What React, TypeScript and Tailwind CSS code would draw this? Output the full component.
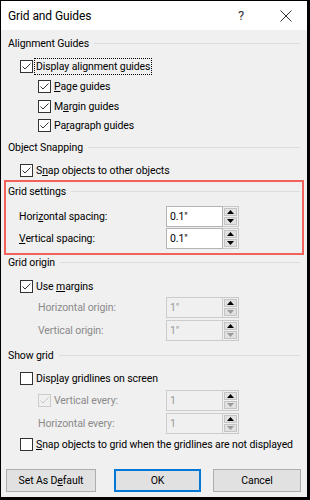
import React from 'react'

const font = "font-['Roboto',sans-serif]"

function CheckBox({ checked, disabled }: { checked?: boolean; disabled?: boolean }) {
  return (
    <div
      className={`w-[13px] h-[13px] shrink-0 border flex items-center justify-center ${
        disabled ? 'border-[#cccccc] bg-[#f0f0f0]' : 'border-[#333333] bg-white'
      }`}
    >
      {checked && (
        <svg width="11" height="11" viewBox="0 0 11 11">
          <path d="M1.5 5.5 L4 8 L9.5 2.5" fill="none" stroke={disabled ? '#c4c4c4' : '#333333'} strokeWidth="1" />
        </svg>
      )}
    </div>
  )
}

function CheckRow({
  label,
  checked,
  disabled,
  focus,
  indent,
  className = '',
}: {
  label: React.ReactNode
  checked?: boolean
  disabled?: boolean
  focus?: boolean
  indent: string
  className?: string
}) {
  return (
    <div className={`h-[20px] flex items-center ${indent} ${className}`}>
      <CheckBox checked={checked} disabled={disabled} />
      <span
        className={`ml-[1px] px-[1px] leading-[15px] whitespace-nowrap ${focus ? 'border border-dotted border-black' : 'border border-transparent'} ${
          disabled ? 'text-[#8a8a8a]' : 'text-black'
        }`}
      >
        {label}
      </span>
    </div>
  )
}

function Header({ title, className = '', pad = 'pl-[7px] pr-[7px]' }: { title: string; className?: string; pad?: string }) {
  return (
    <div className={`h-[16px] flex items-center ${pad} ${className}`}>
      <span className="text-black whitespace-nowrap">{title}</span>
      <div className="flex-1 h-px bg-[#dcdcdc] ml-[5px] mt-[-1px]" />
    </div>
  )
}

function Spinner({ disabled }: { disabled?: boolean }) {
  return (
    <div className="w-[16px] h-full flex flex-col gap-[1px] border border-[#c8c8c8] border-l-0 bg-[#f0f0f0] p-[1px]">
      <div className="flex-1 bg-[#e1e1e1] border border-[#c4c4c4] flex items-center justify-center">
        <svg width="7" height="4" viewBox="0 0 7 4">
          <path d="M0 4 L3.5 0 L7 4 Z" fill="#000" />
        </svg>
      </div>
      <div className="flex-1 bg-[#e1e1e1] border border-[#c4c4c4] flex items-center justify-center">
        <svg width="7" height="4" viewBox="0 0 7 4">
          <path d="M0 0 L3.5 4 L7 0 Z" fill={disabled ? '#9a9a9a' : '#000'} />
        </svg>
      </div>
    </div>
  )
}

function SpinRow({
  label,
  value,
  disabled,
  labelClass,
  className = '',
}: {
  label: React.ReactNode
  value: string
  disabled?: boolean
  labelClass: string
  className?: string
}) {
  return (
    <div className={`h-[21px] flex items-center ${className}`}>
      <div className={`${labelClass} whitespace-nowrap ${disabled ? 'text-[#8a8a8a]' : 'text-black'}`}>{label}</div>
      <div className="flex h-full">
        <div
          className={`w-[57px] h-full border flex items-center px-[3px] ${
            disabled ? 'border-[#cccccc] bg-[#f0f0f0] text-[#9a9a9a]' : 'border-[#b4b4b4] bg-white text-black'
          }`}
        >
          {value}
        </div>
        <Spinner disabled={disabled} />
      </div>
    </div>
  )
}

export default function App() {
  return (
    <div className={`w-[310px] h-[500px] border border-black border-r-[3px] border-b-[3px] bg-[#f0f0f0] text-[10.5px] tracking-[-0.1px] ${font} flex flex-col`}>
      {/* title bar */}
      <div className="h-[29px] bg-white flex items-center pl-[7px] shrink-0">
        <span className="text-[12px] text-black">Grid and Guides</span>
        <span className="ml-auto text-[13px] text-[#333333] mr-[36px]">?</span>
        <svg width="12" height="12" viewBox="0 0 12 12" className="mr-[15px]">
          <path d="M0.5 0.5 L11.5 11.5 M11.5 0.5 L0.5 11.5" stroke="#333" strokeWidth="1" />
        </svg>
      </div>

      <Header title="Alignment Guides" className="mt-[6px]" />
      <CheckRow indent="pl-[19px]" className="mt-[4px]" checked focus label="Display alignment guides" />
      <CheckRow indent="pl-[37px]" checked label={<><u>P</u>age guides</>} />
      <CheckRow indent="pl-[37px]" checked label={<>M<u>a</u>rgin guides</>} />
      <CheckRow indent="pl-[37px]" className="mt-[-1px]" checked label={<>Pa<u>r</u>agraph guides</>} />

      <Header title="Object Snapping" className="mt-[5px]" />
      <CheckRow indent="pl-[19px]" className="mt-[4px]" checked label={<>S<u>n</u>ap objects to other objects</>} />

      {/* highlighted grid settings */}
      <div className="mx-[3px] border-2 border-[#f0625a]">
        <Header title="Grid settings" className="mt-[2px]" pad="pl-[2px] pr-[2px]" />
        <SpinRow className="mt-[6px]" labelClass="pl-[13px] w-[160px]" label={<>Hori<u>z</u>ontal spacing:</>} value={'0.1"'} />
        <SpinRow className="mt-[1px] mb-[4px]" labelClass="pl-[13px] w-[160px]" label={<><u>V</u>ertical spacing:</>} value={'0.1"'} />
      </div>

      <Header title="Grid origin" />
      <CheckRow indent="pl-[19px]" className="mt-[5px]" checked label={<>Use <u>m</u>argins</>} />
      <SpinRow className="mt-[1px]" disabled labelClass="pl-[37px] w-[165px]" label="Horizontal origin:" value={'1"'} />
      <SpinRow className="mt-[2px]" disabled labelClass="pl-[37px] w-[165px]" label="Vertical origin:" value={'1"'} />

      <Header title="Show grid" className="mt-[7px]" />
      <CheckRow indent="pl-[19px]" className="mt-[4px]" label={<>Disp<u>l</u>ay gridlines on screen</>} />
      <div className="h-[21px] flex items-center mt-[2px]">
        <div className="w-[165px] pl-[37px] flex items-center">
          <CheckBox checked disabled />
          <span className="ml-[3px] text-[#8a8a8a]">Vertical every:</span>
        </div>
        <div className="flex h-full">
          <div className="w-[57px] h-full border border-[#cccccc] bg-[#f0f0f0] text-[#9a9a9a] flex items-center px-[3px]">1</div>
          <Spinner disabled />
        </div>
      </div>
      <SpinRow className="mt-[2px]" disabled labelClass="pl-[37px] w-[165px]" label="Horizontal every:" value="1" />
      <CheckRow indent="pl-[19px]" label={<><u>S</u>nap objects to grid when the gridlines are not displayed</>} />

      {/* buttons */}
      <div className="flex mt-[15px] pl-[5px]">
        <button className="w-[90px] h-[23px] bg-[#e1e1e1] border border-[#adadad] text-black">
          Set As D<u>e</u>fault
        </button>
        <button className="ml-[18px] w-[87px] h-[23px] bg-[#e1e1e1] border-2 border-[#0078d7] text-black">OK</button>
        <button className="ml-[12px] w-[88px] h-[23px] bg-[#e1e1e1] border border-[#adadad] text-black">Cancel</button>
      </div>
    </div>
  )
}
